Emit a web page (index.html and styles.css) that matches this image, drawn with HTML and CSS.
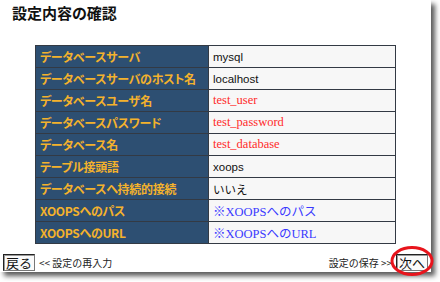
FILE: index.html
```html
<!DOCTYPE html>
<html lang="ja">
<head>
<meta charset="utf-8">
<link rel="stylesheet" href="styles.css">
</head>
<body>
<div class="frame">
  <h1 class="title">設定内容の確認</h1>
  <table class="conf">
    <tr><th>データベースサーバ</th><td>mysql</td></tr>
    <tr><th>データベースサーバのホスト名</th><td>localhost</td></tr>
    <tr><th>データベースユーザ名</th><td class="red">test_user</td></tr>
    <tr><th>データベースパスワード</th><td class="red">test_password</td></tr>
    <tr><th>データベース名</th><td class="red">test_database</td></tr>
    <tr><th>テーブル接頭語</th><td>xoops</td></tr>
    <tr><th>データベースへ持続的接続</th><td class="jp">いいえ</td></tr>
    <tr><th>XOOPSへのパス</th><td class="blue">※XOOPSへのパス</td></tr>
    <tr><th>XOOPSへのURL</th><td class="blue">※XOOPSへのURL</td></tr>
  </table>
  <div class="footer">
    <div class="side">
      <button class="btn">戻る</button>
      <span class="note">&lt;&lt; 設定の再入力</span>
    </div>
    <div class="side">
      <span class="note">設定の保存 &gt;&gt;</span>
      <button class="btn next">次へ</button>
    </div>
  </div>
  <svg class="ring" width="44" height="32" viewBox="0 0 44 32"><ellipse cx="22" cy="16" rx="20" ry="13.5" fill="none" stroke="#e8141c" stroke-width="3"/></svg>
</div>
</body>
</html>
```
FILE: styles.css
```css
html, body {
  margin: 0;
  padding: 0;
  background: #ffffff;
}
body {
  width: 440px;
  height: 282px;
  overflow: hidden;
}
.frame {
  position: relative;
  width: 431px;
  height: 272px;
  background: #ffffff;
  box-shadow: 4px 4px 5px rgba(0, 0, 0, 0.65);
  font-family: "Noto Sans CJK JP", sans-serif;
}
.title {
  margin: 0;
  padding: 3px 0 0 12px;
  height: 45px;
  box-sizing: border-box;
  font-size: 15px;
  font-weight: bold;
  color: #111;
  line-height: 20px;
  font-feature-settings: "palt";
}
.conf {
  margin-left: 35px;
  width: 361px;
  border-collapse: collapse;
  border: 1px solid #2a2a2a;
}
.conf tr {
  height: 22px;
}
.conf th, .conf td {
  height: 22px;
  padding: 0 0 0 4px;
  border: 1px solid #333a44;
  text-align: left;
  white-space: nowrap;
  box-sizing: border-box;
}
.conf th {
  width: 173px;
  background: #2d4f72;
  color: #f4b22c;
  font-size: 12px;
  font-weight: bold;
  font-feature-settings: "palt";
  letter-spacing: -0.3px;
}
.conf td {
  background: #f7f7f7;
  color: #111;
  font-family: "Liberation Sans", "Noto Sans CJK JP", sans-serif;
  font-size: 11.5px;
}
.conf td.jp {
  font-family: "Noto Sans CJK JP", sans-serif;
  font-size: 11.5px;
}
.conf td.red {
  color: #ff2a2a;
  font-family: "Liberation Serif", serif;
  font-size: 12.5px;
}
.conf td.blue {
  color: #3a3aff;
  font-family: "Liberation Serif", "Noto Sans CJK JP", serif;
  font-size: 12.5px;
}
.footer {
  display: flex;
  justify-content: space-between;
  align-items: center;
  margin-top: 10px;
  padding: 0 3px;
}
.side {
  display: flex;
  align-items: center;
  gap: 4px;
}
.btn {
  margin: 0;
  padding: 0 2px;
  height: 17px;
  border: 1px solid #222;
  border-right-color: #777;
  border-bottom-color: #777;
  box-shadow: inset 1px 1px 0 #999;
  background: #fafafa;
  font-family: "Noto Sans CJK JP", sans-serif;
  font-size: 13px;
  line-height: 15px;
  color: #111;
}
.note {
  font-size: 10px;
  color: #222;
  font-family: "Noto Sans CJK JP", sans-serif;
}
.ring {
  position: absolute;
  left: 390px;
  top: 245px;
}
```
